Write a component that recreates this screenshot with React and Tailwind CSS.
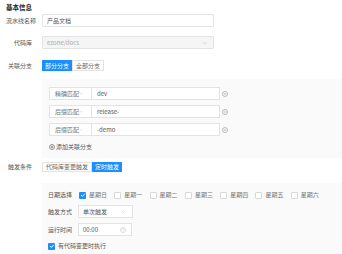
import React from "react";

const Chevron = ({ className = "" }) => (
  <svg viewBox="0 0 8 5" className={className} fill="none" stroke="currentColor" strokeWidth="0.9">
    <path d="M1 1l3 3 3-3" />
  </svg>
);

const MinusCircle = () => (
  <svg viewBox="0 0 12 12" className="w-[6px] h-[6px] text-[#999]" fill="none" stroke="currentColor" strokeWidth="1.3">
    <circle cx="6" cy="6" r="5" />
    <path d="M3.5 6h5" />
  </svg>
);

const PlusCircle = () => (
  <svg viewBox="0 0 12 12" className="w-[6px] h-[6px] text-[#555]" fill="none" stroke="currentColor" strokeWidth="1.2">
    <circle cx="6" cy="6" r="5" />
    <path d="M3.5 6h5M6 3.5v5" />
  </svg>
);

const Clock = () => (
  <svg viewBox="0 0 12 12" className="w-[6px] h-[6px] text-[#bbb]" fill="none" stroke="currentColor" strokeWidth="1">
    <circle cx="6" cy="6" r="5" />
    <path d="M6 3v3l2 1.2" />
  </svg>
);

const Checkbox = ({ checked }) =>
  checked ? (
    <span className="w-[7px] h-[7px] rounded-[1px] bg-[#1890ff] flex items-center justify-center shrink-0">
      <svg viewBox="0 0 8 8" className="w-[6px] h-[6px]" fill="none" stroke="white" strokeWidth="1.3">
        <path d="M1.5 4.2l1.7 1.6L6.5 2.3" />
      </svg>
    </span>
  ) : (
    <span className="w-[7px] h-[7px] rounded-[1px] border border-[#d9d9d9] bg-white shrink-0" />
  );

const Label = ({ children }) => (
  <div className="w-[26px] ml-[6px] mr-[10px] text-right whitespace-nowrap text-[#555]">{children}</div>
);

const branches = [
  { match: "精确匹配", value: "dev" },
  { match: "后缀匹配", value: "release-" },
  { match: "后缀匹配", value: "-demo" },
];

const days = ["星期日", "星期一", "星期二", "星期三", "星期四", "星期五", "星期六"];

export default function App() {
  return (
    <div className="w-[342px] h-[254px] overflow-hidden bg-white text-[6px] leading-[8px] text-[#666] font-['Noto_Sans_CJK_SC','Noto_Sans',sans-serif]">
      <div className="pl-[6px] pt-[3px] h-[14px] text-[6.5px] leading-[8px] font-bold text-[#222]">基本信息</div>

      <div className="flex items-center h-[13px]">
        <Label>流水线名称</Label>
        <div className="w-[172px] h-[13px] border border-[#e3e3e3] rounded-[1px] px-[4px] flex items-center text-[#555]">
          产品文档
        </div>
      </div>

      <div className="flex items-center h-[13px] mt-[9px]">
        <Label>代码库</Label>
        <div className="w-[172px] h-[13px] border border-[#e3e3e3] rounded-[1px] px-[4px] flex items-center justify-between bg-[#f5f5f5] text-[#aaa]">
          <span>ezone/docs</span>
          <Chevron className="w-[5px] h-[4px] text-[#bbb] mr-[2px]" />
        </div>
      </div>

      <div className="flex items-center h-[11px] mt-[11px]">
        <Label>关联分支</Label>
        <div className="flex h-[11px]">
          <div className="px-[3px] bg-[#1890ff] text-white flex items-center">部分分支</div>
          <div className="px-[3px] border border-[#e3e3e3] text-[#666] flex items-center">全部分支</div>
        </div>
      </div>

      <div className="ml-[42px] mt-[8px] bg-[#fafafa] pt-[8px] pl-[7px] pb-[7px]">
        <div className="flex flex-col gap-[5px]">
          {branches.map((b, i) => (
            <div key={i} className="flex items-center h-[13px]">
              <div className="w-[43px] h-[13px] bg-white border border-[#e3e3e3] px-[5px] flex items-center justify-between text-[#777]">
                <span>{b.match}</span>
                <Chevron className="w-[4px] h-[3px] text-[#bbb] mr-[3px]" />
              </div>
              <div className="w-[128px] h-[13px] bg-white border border-l-0 border-[#e3e3e3] px-[5px] flex items-center text-[#555]">
                {b.value}
              </div>
              <div className="ml-[2px] flex items-center">
                <MinusCircle />
              </div>
            </div>
          ))}
        </div>
        <div className="mt-[7px] h-[8px] flex items-center gap-[1px] text-[#555]">
          <PlusCircle />
          <span>添加关联分支</span>
        </div>
      </div>

      <div className="flex items-center h-[10px] mt-[4px]">
        <Label>触发条件</Label>
        <div className="flex h-[10px]">
          <div className="px-[3px] border border-[#e3e3e3] text-[#666] flex items-center">代码库变更触发</div>
          <div className="px-[3px] bg-[#1890ff] text-white flex items-center">定时触发</div>
        </div>
      </div>

      <div className="ml-[42px] mt-[11px] bg-[#fafafa] pt-[7px] pl-[6px] pb-[8px]">
        <div className="flex items-center h-[10px]">
          <div className="w-[24px] mr-[7px] whitespace-nowrap text-[#555]">日期选择</div>
          <div className="flex items-center">
            {days.map((d, i) => (
              <div key={d} className="flex items-center w-[35.3px] shrink-0">
                <Checkbox checked={i === 0} />
                <span className="ml-[3px] whitespace-nowrap text-[#777]">{d}</span>
              </div>
            ))}
          </div>
        </div>

        <div className="flex items-center h-[13px] mt-[5px]">
          <div className="w-[24px] mr-[6px] whitespace-nowrap text-[#555]">触发方式</div>
          <div className="w-[55px] h-[13px] bg-white border border-[#e3e3e3] pl-[4px] pr-[6px] flex items-center justify-between text-[#555]">
            <span>单次触发</span>
            <Chevron className="w-[5px] h-[3px] text-[#bbb]" />
          </div>
        </div>

        <div className="flex items-center h-[13px] mt-[5px]">
          <div className="w-[24px] mr-[6px] whitespace-nowrap text-[#555]">运行时间</div>
          <div className="w-[54px] h-[13px] bg-white border border-[#e3e3e3] pl-[4px] pr-[5px] flex items-center justify-between text-[#555]">
            <span>00:00</span>
            <Clock />
          </div>
        </div>

        <div className="flex items-center h-[8px] mt-[6px]">
          <Checkbox checked />
          <span className="ml-[3px] text-[#555]">有代码变更时执行</span>
        </div>
      </div>
    </div>
  );
}
